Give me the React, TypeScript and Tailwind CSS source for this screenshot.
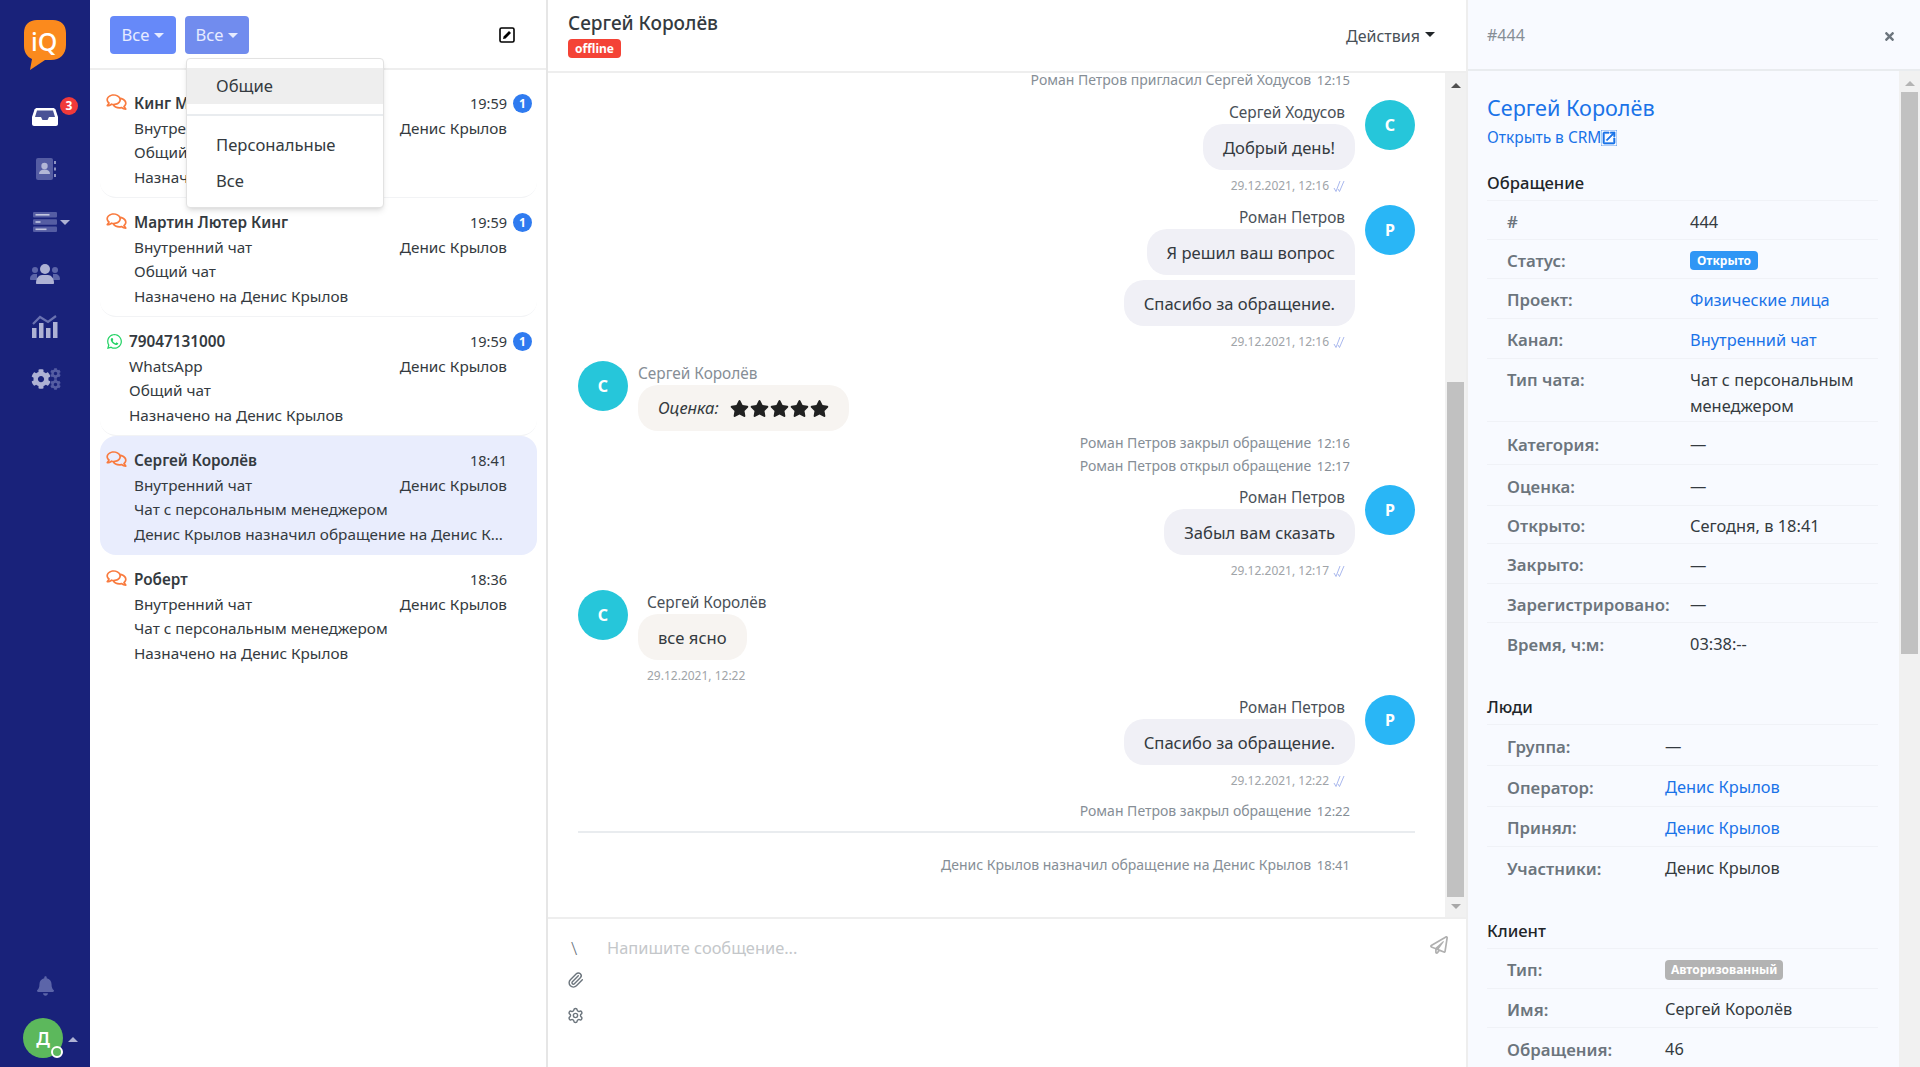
import type { ReactNode } from "react";
import {
  FaBell,
  FaCog,
  FaRegComments,
  FaRegPaperPlane,
  FaStar,
  FaTimes,
  FaWhatsapp,
} from "react-icons/fa";
import { MdOpenInNew } from "react-icons/md";
import { Paperclip, Settings } from "lucide-react";

const Caret = ({ className }: { className: string }) => (
  <span className={`inline-block w-0 h-0 border-x-[5px] border-x-transparent border-t-[5px] ${className}`} />
);

const Sidebar = () => {
  return (
    <div className="w-[90px] h-full shrink-0 bg-[#19227a] flex flex-col items-center text-[#5c65a9]">
      <svg viewBox="0 0 42 50" className="w-[42px] h-[50px] mt-[20px]">
        <path d="M13 0h16c8 0 13 5 13 13v12c0 9-6 15-15 15h-6L6 50l2-11C3 37 0 32 0 26V13C0 5 5 0 13 0z" fill="#fb8a1d" />
        <text x="7" y="31" fill="#fff" fontSize="25" fontFamily="Noto Sans" fontWeight="500">iQ</text>
      </svg>
      <div className="relative mt-[38px] h-[18px] flex items-start">
        <svg viewBox="0 0 26 18" className="w-[26px] h-[18px]">
          <path d="M5 0h16c1 0 2 .6 2.5 1.5L26 9v7c0 1-1 2-2 2H2c-1 0-2-1-2-2V9l2.5-7.5C3 .6 4 0 5 0z" fill="#fff" />
          <path d="M5 2.5h16L23 9h-6l-1.5 3h-5L9 9H3z" fill="#4a5296" />
        </svg>
        <span className="absolute -top-[11px] left-[28px] w-[18px] h-[18px] rounded-full bg-[#f03a3a] text-white text-[12px] font-bold flex items-center justify-center">3</span>
      </div>
      <svg viewBox="0 0 20 22" className="w-[20px] h-[22px] mt-[32px] ml-[1px]">
        <rect width="17" height="22" rx="2" fill="#555da3" />
        <circle cx="8.5" cy="8" r="3.2" fill="#b3b7d6" />
        <path d="M3 16c0-3 2-4.500 5.500-4.500S14 13 14 16z" fill="#b3b7d6" />
        <rect x="18" y="3" width="2" height="3" fill="#8f94c2" />
        <rect x="18" y="9.500" width="2" height="3" fill="#8f94c2" />
        <rect x="18" y="16" width="2" height="3" fill="#8f94c2" />
      </svg>
      <div className="relative mt-[32px] h-[20px] flex items-center">
        <svg viewBox="0 0 24 20" className="w-[24px] h-[20px]">
          <rect width="24" height="5.500" rx="1" fill="#555da3" />
          <rect y="7.200" width="24" height="5.500" rx="1" fill="#555da3" />
          <rect y="14.500" width="24" height="5.500" rx="1" fill="#555da3" />
          <rect x="2.500" y="2" width="14" height="1.600" fill="#c3c7e0" />
          <rect x="2.500" y="9.200" width="5" height="1.600" fill="#c3c7e0" />
          <rect x="2.500" y="16.500" width="11" height="1.600" fill="#c3c7e0" />
        </svg>
        <Caret className="absolute left-[27px] top-[8px] border-x-[5.5px] border-t-[#aeb2d4]" />
      </div>
      <svg viewBox="0 0 30 20" className="w-[30px] h-[20px] mt-[32px]">
        <circle cx="5" cy="6" r="3" fill="#5c65a9" />
        <circle cx="25" cy="6" r="3" fill="#5c65a9" />
        <path d="M0 15c0-3 2-5 5-5h2v6H1c-.6 0-1-.4-1-1zM30 15c0-3-2-5-5-5h-2v6h6c.6 0 1-.4 1-1z" fill="#5c65a9" />
        <circle cx="15" cy="5" r="5" fill="#aeb2d4" />
        <path d="M6 19c0-5 3-8 6-8h6c3 0 6 3 6 8 0 .6-.4 1-1 1H7c-.6 0-1-.4-1-1z" fill="#aeb2d4" />
      </svg>
      <svg viewBox="0 0 26 23" className="w-[26px] h-[23px] mt-[31px]">
        <rect x="0" y="13" width="4.500" height="10" fill="#aeb2d4" />
        <rect x="7" y="8" width="4.500" height="15" fill="#aeb2d4" />
        <rect x="14" y="13" width="4.500" height="10" fill="#aeb2d4" />
        <rect x="21" y="7" width="4.500" height="16" fill="#aeb2d4" />
        <path d="M1 9l7-7 8 5 8-6" fill="none" stroke="#6a72b0" strokeWidth="2.200" />
      </svg>
      <div className="mt-[30px] ml-[1px] flex items-center">
        <FaCog className="w-[20px] h-[20px] text-[#aeb2d4]" />
        <div className="flex flex-col -ml-[1px] text-[#555da3]">
          <FaCog className="w-[11px] h-[11px]" />
          <FaCog className="w-[11px] h-[11px]" />
        </div>
      </div>
      <FaBell className="w-[17px] h-[20px] mt-auto" />
      <div className="relative mt-[22px] mb-[9px] mr-[4px] w-[40px] h-[40px] rounded-full bg-[#5cb85c] text-white text-[18px] font-semibold flex items-center justify-center">
        Д
        <span className="absolute left-[28px] top-[28px] w-[12px] h-[12px] rounded-full bg-[#5cb85c] border-2 border-white" />
        <Caret className="absolute left-[45px] top-[19px] rotate-180 border-t-[#aeb2d4]" />
      </div>
    </div>
  );
};

type ChatCardProps = {
  name: string;
  time: string;
  channel: string;
  type: string;
  last: string;
  unread?: boolean;
  active?: boolean;
  whatsapp?: boolean;
  plain?: boolean;
};

const ChatCard = ({ name, time, channel, type, last, unread, active, whatsapp, plain }: ChatCardProps) => {
  return (
    <div className={`h-[119px] rounded-[16px] pt-[12px] flex ${active ? "bg-[#e9edfd]" : plain ? "" : "border-b border-[#f2f3f5]"}`}>
      <div className={`${whatsapp ? "w-[29px]" : "w-[34px]"} pl-[6px] shrink-0`}>
        {whatsapp ? (
          <FaWhatsapp className="w-[17px] h-[17px] mt-[4px] text-[#25d366]" />
        ) : (
          <FaRegComments className="w-[21px] h-[18px] mt-[2px] text-[#f97b3f]" />
        )}
      </div>
      <div className="flex-1 min-w-0 text-[15.300px] leading-[24.5px] text-[#343a40]">
        <div className="flex h-[24.5px]">
          <span className="flex-1 font-semibold">{name}</span>
          <span className="w-[30px] mr-[30px] text-[14.500px] whitespace-nowrap flex justify-end">{time}</span>
        </div>
        <div className="flex h-[24.5px] pr-[30px]">
          <span className="flex-1">{channel}</span>
          <span>Денис Крылов</span>
        </div>
        <div className="h-[24.5px]">{type}</div>
        <div className="h-[24.5px] w-[373px] truncate">{last}</div>
      </div>
      {unread && (
        <span className="absolute ml-[413px] mt-[3px] w-[19px] h-[19px] rounded-full bg-[#2f7bf0] text-white text-[12px] font-bold flex items-center justify-center">1</span>
      )}
    </div>
  );
};

const ChatList = () => {
  return (
    <div className="w-[458px] shrink-0 border-r-2 border-[#e6e6e6] h-full relative">
      <div className="h-[70px] border-b-2 border-[#eeeeee] flex items-start pt-[16px] pl-[20px]">
        <button className="h-[38px] w-[66px] rounded-[4px] bg-[#6689f9] text-[#e6ebff] text-[16.600px] flex items-center justify-center gap-[5px]">
          Все
          <Caret className="border-t-[#e6ebff]" />
        </button>
        <button className="ml-[9px] h-[38px] w-[64px] rounded-[4px] bg-[#718cee] text-[#e6ebff] text-[16.600px] flex items-center justify-center gap-[5px]">
          Все
          <Caret className="border-t-[#e6ebff]" />
        </button>
        <svg viewBox="0 0 16 16" className="ml-auto mr-[31px] mt-[11px] w-[16px] h-[16px]">
          <rect x="1" y="1" width="14" height="14" rx="1.500" fill="none" stroke="#000" strokeWidth="1.600" />
          <path d="M4 12l.6-2.600L10 4l2 2-5.400 5.400z" fill="#000" />
        </svg>
      </div>
      <div className="absolute left-[96px] top-[58px] w-[198px] h-[150px] rounded-[4px] bg-white border border-[#e2e2e2] shadow-md z-10 pt-[9px] text-[16.600px] text-[#343a40]">
        <div className="h-[36px] bg-[#eeeeee] pl-[29px] leading-[36px]">Общие</div>
        <div className="h-[2px] bg-[#e9ecef] mt-[10px]" />
        <div className="h-[36px] pl-[29px] leading-[36px] mt-[11px]">Персональные</div>
        <div className="h-[36px] pl-[29px] leading-[36px]">Все</div>
      </div>
      <div className="pt-[9px] pl-[10px] pr-[9px]">
        <ChatCard name="Кинг Мартин" time="19:59" channel="Внутренний чат" type="Общий чат" last="Назначено на Денис Крылов" unread />
        <ChatCard name="Мартин Лютер Кинг" time="19:59" channel="Внутренний чат" type="Общий чат" last="Назначено на Денис Крылов" unread />
        <ChatCard name="79047131000" time="19:59" channel="WhatsApp" type="Общий чат" last="Назначено на Денис Крылов" unread whatsapp />
        <ChatCard name="Сергей Королёв" time="18:41" channel="Внутренний чат" type="Чат с персональным менеджером" last="Денис Крылов назначил обращение на Денис Крылов" active />
        <ChatCard name="Роберт" time="18:36" channel="Внутренний чат" type="Чат с персональным менеджером" last="Назначено на Денис Крылов" plain />
      </div>
    </div>
  );
};

const SysLine = ({ text, time, size = "h-[23px] leading-[23px]", className = "" }: { text: string; time: string; size?: string; className?: string }) => (
  <div className={`pr-[95px] text-right text-[14px] text-[#868e96] ${size} ${className}`}>
    {text} <span className="ml-[2px] text-[13px]">{time}</span>
  </div>
);

const Avatar = ({ letter, color }: { letter: string; color: string }) => (
  <div className={`w-[50px] h-[50px] rounded-full shrink-0 text-white text-[16px] font-bold flex items-center justify-center ${color}`}>
    {letter}
  </div>
);

const MsgTime = ({ time, read }: { time: string; read?: boolean }) => (
  <div className="h-[30px] pt-[2px] flex items-center gap-[4px] text-[12px] text-[#a0a4a8]">
    {time}
    {read && (
      <svg viewBox="0 0 12 13" className="w-[12px] h-[13px]" fill="none" stroke="#a9b8ee" strokeWidth="1">
        <path d="M1 8l2 3.500L7 1" />
        <path d="M5 9l1.500 2.500L11 1" />
      </svg>
    )}
  </div>
);

type OutMsgProps = {
  name: string;
  letter: string;
  color: string;
  time: string;
  bubbles: string[];
  className: string;
};

const OutMsg = ({ name, letter, color, time, bubbles, className }: OutMsgProps) => {
  return (
    <div className={`flex justify-end pr-[30px] gap-[10px] ${className}`}>
      <div className="flex flex-col items-end">
        <div className="h-[24px] leading-[26px] pr-[10px] text-[15.400px] text-[#495057]">{name}</div>
        {bubbles.map((text, index) => (
          <div
            key={index}
            className={`h-[46px] px-[20px] leading-[48px] text-[16.600px] text-[#343a40] bg-[#f0f0f6] ${
              bubbles.length === 1
                ? "rounded-[20px]"
                : index === 0
                  ? "rounded-l-[20px] rounded-tr-[20px]"
                  : "rounded-l-[20px] rounded-br-[20px] mt-[5px]"
            }`}
          >
            {text}
          </div>
        ))}
        <div className="pr-[10px]">
          <MsgTime time={time} read />
        </div>
      </div>
      <Avatar letter={letter} color={color} />
    </div>
  );
};

type ScrollbarProps = {
  thumb: string;
  dark?: boolean;
  bottomArrow?: boolean;
};

const Scrollbar = ({ thumb, dark, bottomArrow }: ScrollbarProps) => (
  <div className="w-[21px] h-full shrink-0 bg-[#f1f1f1] flex flex-col items-center">
    <Caret className={`rotate-180 mt-[10px] ${dark ? "border-t-[#505050]" : "border-t-[#b4b4b4]"}`} />
    <div className={`w-[17px] bg-[#c1c1c1] ${thumb}`} />
    {bottomArrow && <Caret className="mt-[7px] border-t-[#a8a8a8]" />}
  </div>
);

const ChatPane = () => {
  return (
    <div className="flex-1 min-w-0 h-full flex flex-col">
      <div className="h-[73px] shrink-0 border-b-2 border-[#eeeeee] flex justify-between pl-[20px] pr-[31px]">
        <div className="pt-[9px]">
          <div className="text-[19px] leading-[28px] font-medium text-[#343a40]">Сергей Королёв</div>
          <span className="block w-[53px] h-[19px] mt-[2px] rounded-[4px] bg-[#f44336] text-white text-[12px] leading-[19px] font-bold text-center">offline</span>
        </div>
        <div className="pt-[24px] flex items-start gap-[5px] text-[16px] leading-[24px] text-[#495057]">
          Действия
          <Caret className="mt-[8px] border-t-[#212529]" />
        </div>
      </div>
      <div className="flex-1 min-h-0 flex">
        <div className="flex-1 min-w-0 overflow-hidden">
          <SysLine text="Роман Петров пригласил Сергей Ходусов" time="12:15" size="h-[14px] leading-[14px]" />
          <OutMsg name="Сергей Ходусов" letter="С" color="bg-[#26c6da]" time="29.12.2021, 12:16" bubbles={["Добрый день!"]} className="mt-[13px]" />
          <OutMsg name="Роман Петров" letter="Р" color="bg-[#29b6f6]" time="29.12.2021, 12:16" bubbles={["Я решил ваш вопрос", "Спасибо за обращение."]} className="mt-[5px]" />
          <div className="flex pl-[30px] gap-[10px] mt-[5px]">
            <Avatar letter="С" color="bg-[#26c6da]" />
            <div>
              <div className="h-[24px] leading-[26px] text-[15.400px] text-[#868e96]">Сергей Королёв</div>
              <div className="h-[46px] px-[20px] rounded-[20px] bg-[#f7f4f1] flex items-center gap-[11px] text-[16.600px] italic text-[#343a40]">
                Оценка:
                <span className="flex gap-[1px] text-[#212121]">
                  <FaStar className="w-[19px] h-[19px]" />
                  <FaStar className="w-[19px] h-[19px]" />
                  <FaStar className="w-[19px] h-[19px]" />
                  <FaStar className="w-[19px] h-[19px]" />
                  <FaStar className="w-[19px] h-[19px]" />
                </span>
              </div>
            </div>
          </div>
          <SysLine text="Роман Петров закрыл обращение" time="12:16" />
          <SysLine text="Роман Петров открыл обращение" time="12:17" />
          <OutMsg name="Роман Петров" letter="Р" color="bg-[#29b6f6]" time="29.12.2021, 12:17" bubbles={["Забыл вам сказать"]} className="mt-[8px]" />
          <div className="flex pl-[30px] gap-[10px] mt-[5px]">
            <Avatar letter="С" color="bg-[#26c6da]" />
            <div>
              <div className="h-[24px] leading-[26px] pl-[9px] text-[15.400px] text-[#495057]">Сергей Королёв</div>
              <div className="w-fit h-[46px] px-[20px] leading-[48px] rounded-[20px] bg-[#f7f4f1] text-[16.600px] text-[#343a40]">все ясно</div>
              <div className="pl-[9px]">
                <MsgTime time="29.12.2021, 12:22" />
              </div>
            </div>
          </div>
          <OutMsg name="Роман Петров" letter="Р" color="bg-[#29b6f6]" time="29.12.2021, 12:22" bubbles={["Спасибо за обращение."]} className="mt-[5px]" />
          <SysLine text="Роман Петров закрыл обращение" time="12:22" className="mt-[4px]" />
          <div className="h-[2px] bg-[#e9ecef] mt-[9px] ml-[30px] mr-[30px]" />
          <SysLine text="Денис Крылов назначил обращение на Денис Крылов" time="18:41" className="mt-[20px]" />
        </div>
        <Scrollbar thumb="mt-[294px] h-[515px]" dark bottomArrow />
      </div>
      <div className="h-[150px] shrink-0 border-t-2 border-[#eeeeee] flex pl-[19px] pr-[18px] pt-[17px]">
        <div className="w-[40px] flex flex-col text-[#6c757d]">
          <span className="h-[24px] pl-[4px] text-[18px] font-light leading-[24px] text-[#6c757d]">\</span>
          <Paperclip className="w-[17px] h-[18px] mt-[11px]" />
          <Settings className="w-[17px] h-[17px] mt-[18px]" />
        </div>
        <div className="flex-1 text-[16.400px] leading-[24px] text-[#c4c7ca]">Напишите сообщение...</div>
        <FaRegPaperPlane className="w-[18px] h-[18px] text-[#b0b0b0]" />
      </div>
    </div>
  );
};

type RowProps = {
  label: string;
  height: string;
  valueWidth?: string;
  border?: boolean;
  children: ReactNode;
};

const Row = ({ label, height, valueWidth = "w-[183px]", border = true, children }: RowProps) => {
  return (
    <div className={`flex items-center pl-[20px] pt-[4px] text-[16.400px] ${height} ${border ? "border-b border-[#f0f2f7]" : ""}`}>
      <span className={`${valueWidth} shrink-0 text-[16.800px] font-semibold text-[#6c757d]`}>{label}</span>
      <div className="text-[#343a40]">{children}</div>
    </div>
  );
};

const SectionTitle = ({ title, className }: { title: string; className: string }) => (
  <div className={`h-[35px] leading-[34px] border-b border-[#f0f2f7] text-[16.600px] font-medium text-[#212529] ${className}`}>{title}</div>
);

const Link = ({ children }: { children: ReactNode }) => <span className="text-[#1a73e8]">{children}</span>;

const InfoPanel = () => {
  return (
    <div className="w-[454px] shrink-0 h-full border-l-2 border-[#eeeeee] bg-[#f8faff] flex flex-col">
      <div className="h-[71px] shrink-0 border-b-2 border-[#e9ecef] flex justify-between items-center pl-[19px] pr-[24px] text-[16px] text-[#868e96]">
        #444
        <FaTimes className="w-[13px] h-[13px] mt-[4px] text-[#6c757d]" />
      </div>
      <div className="flex-1 min-h-0 flex">
        <div className="flex-1 min-w-0 pl-[19px] pr-[21px] pt-[23px] overflow-hidden">
          <div className="h-[28px] leading-[28px] text-[21.600px] text-[#1a73e8] whitespace-nowrap">Сергей Королёв</div>
          <div className="mt-[4px] h-[24px] flex items-center text-[15.500px] text-[#1a73e8]">
            Открыть в CRM
            <MdOpenInNew className="w-[16px] h-[16px]" stroke="currentColor" strokeWidth={1} />
          </div>
          <SectionTitle title="Обращение" className="mt-[16px]" />
          <Row label="#" height="h-[39px]">444</Row>
          <Row label="Статус:" height="h-[38.500px]">
            <span className="block px-[7px] h-[19px] rounded-[4px] bg-[#2f96f5] text-white text-[12px] leading-[19px] font-bold">Открыто</span>
          </Row>
          <Row label="Проект:" height="h-[40px]"><Link>Физические лица</Link></Row>
          <Row label="Канал:" height="h-[40px]"><Link>Внутренний чат</Link></Row>
          <div className="flex pl-[20px] pt-[8px] h-[63px] border-b border-[#f0f2f7] text-[16.400px] leading-[26px]">
            <span className="w-[183px] shrink-0 text-[16.800px] font-semibold text-[#6c757d]">Тип чата:</span>
            <div className="text-[#343a40]">Чат с персональным<br />менеджером</div>
          </div>
          <Row label="Категория:" height="h-[43px]">—</Row>
          <Row label="Оценка:" height="h-[41px]">—</Row>
          <Row label="Открыто:" height="h-[38px]">Сегодня, в 18:41</Row>
          <Row label="Закрыто:" height="h-[40px]">—</Row>
          <Row label="Зарегистрировано:" height="h-[39px]">—</Row>
          <Row label="Время, ч:м:" height="h-[40px]" border={false}>03:38:--</Row>
          <SectionTitle title="Люди" className="mt-[27px]" />
          <Row label="Группа:" height="h-[41px]" valueWidth="w-[158px]">—</Row>
          <Row label="Оператор:" height="h-[41px]" valueWidth="w-[158px]"><Link>Денис Крылов</Link></Row>
          <Row label="Принял:" height="h-[40px]" valueWidth="w-[158px]"><Link>Денис Крылов</Link></Row>
          <Row label="Участники:" height="h-[40px]" valueWidth="w-[158px]" border={false}>Денис Крылов</Row>
          <SectionTitle title="Клиент" className="mt-[27px]" />
          <Row label="Тип:" height="h-[40px]" valueWidth="w-[158px]">
            <span className="block px-[6px] h-[20px] rounded-[4px] bg-[#b3b3b3] text-white text-[12px] leading-[20px] font-bold">Авторизованный</span>
          </Row>
          <Row label="Имя:" height="h-[39px]" valueWidth="w-[158px]">Сергей Королёв</Row>
          <Row label="Обращения:" height="h-[40px]" valueWidth="w-[158px]" border={false}>46</Row>
        </div>
        <Scrollbar thumb="mt-[6px] h-[562px]" />
      </div>
    </div>
  );
};

const App = () => {
  return (
    <div className="flex w-full h-[1067px] overflow-hidden bg-white font-['Noto_Sans',sans-serif]">
      <Sidebar />
      <ChatList />
      <ChatPane />
      <InfoPanel />
    </div>
  );
};

export default App;
